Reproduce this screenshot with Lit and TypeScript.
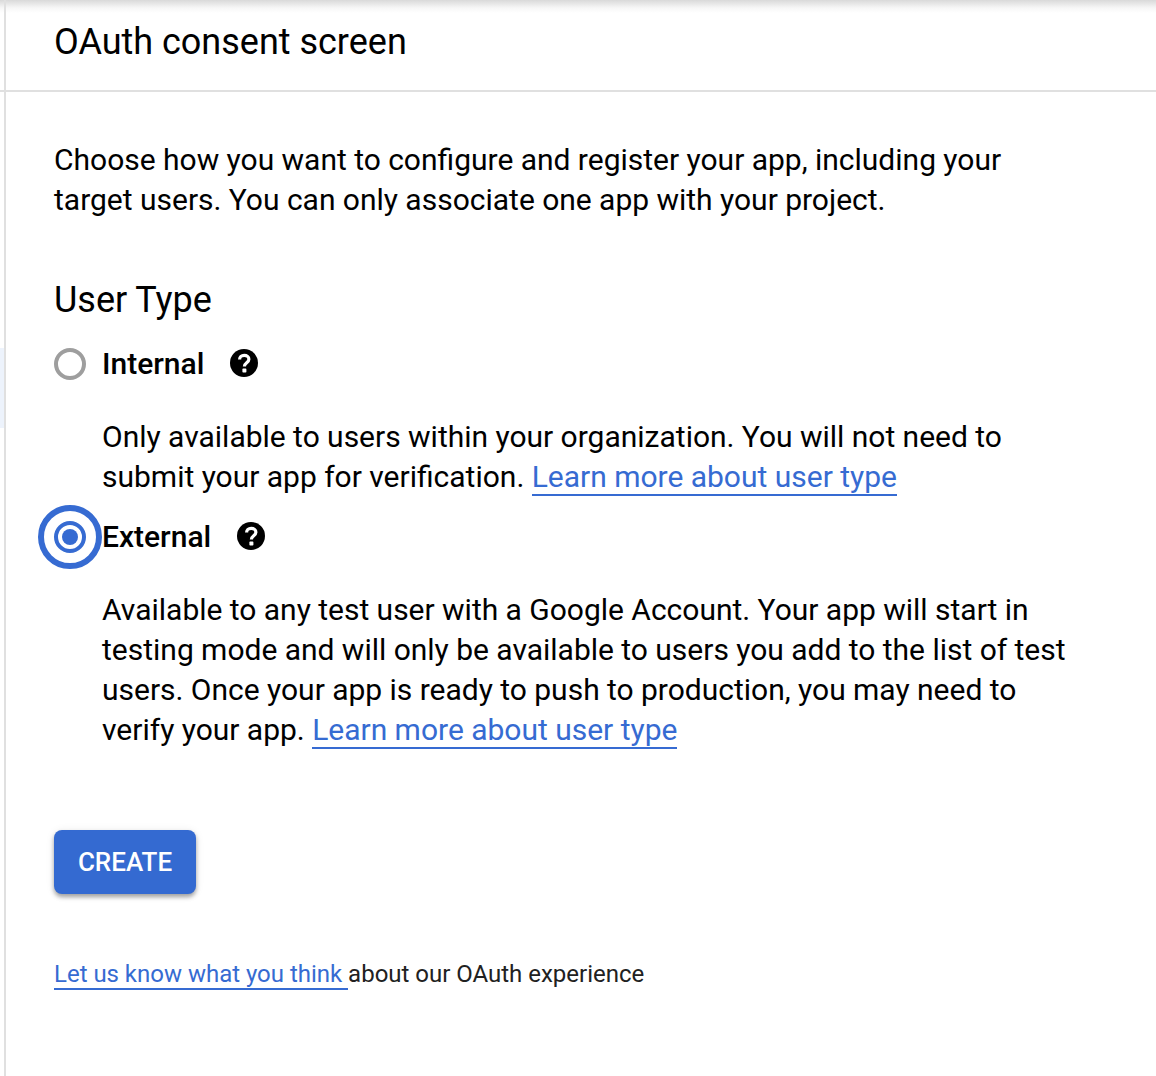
import { LitElement, html, css } from "lit";
import { customElement, state } from "lit/decorators.js";

@customElement("app-root")
export class AppRoot extends LitElement {
  @state() private selected = "External";

  static styles = css`
    :host { display: block; height: 1076px; overflow: hidden; background: #fff; color: #000; font-family: Roboto, sans-serif; font-size: 30px; line-height: 40px; word-spacing: -0.08px; }
    .shell { display: flex; height: 1076px; background: linear-gradient(to bottom, #d9d9d9 0, #e8e8e8 4px, #f7f7f7 8px, #fff 13px) no-repeat; }
    .rail { width: 4px; border-right: 2px solid #e0e0e0; flex: none; }
    .rail-head { height: 90px; border-bottom: 2px solid #e0e0e0; }
    .current { margin-top: 256px; height: 80px; background: #edf3fc; }
    .page { flex: 1; min-width: 0; }
    header { height: 90px; box-sizing: content-box; border-bottom: 2px solid #e0e0e0; padding-left: 48px; }
    h1, h2, p { margin: 0; font-weight: 400; white-space: nowrap; }
    h1 { font-size: 36px; line-height: 84px; }
    main { padding: 48px 0 0 48px; }
    h2 { font-size: 36px; line-height: 48px; margin-top: 56px; }
    .row { display: flex; align-items: center; height: 40px; margin-top: 20px; }
    .radio { width: 32px; height: 32px; margin-right: 16px; overflow: visible; flex: none; }
    .name { font-weight: 500; }
    .help { width: 28px; height: 28px; margin-left: 26px; margin-top: -2px; }
    .desc { margin: 33px 0 0 48px; }
    a { color: #366bd2; border-bottom: 2px solid #366bd2; text-decoration: none; }
    button { display: block; margin-top: 80px; width: 142px; height: 64px; border: 0; border-radius: 8px; background: #346ad1; color: #fff; font: 500 26px/64px Roboto, sans-serif; padding: 0; box-shadow: 0 3px 4px rgba(0,0,0,.34), 0 1px 10px rgba(0,0,0,.08); }
    .feedback { margin-top: 60px; font-size: 24px; color: #212121; }
  `;

  private radio(name: string) {
    const on = this.selected === name;
    return html`<svg class="radio" viewBox="0 0 32 32" @click=${() => (this.selected = name)}>
      ${on
        ? html`<svg viewBox="0 0 32 32" overflow="visible"><circle cx="16" cy="16" r="29" fill="none" stroke="#366bd2" stroke-width="6"/><circle cx="16" cy="16" r="14" fill="none" stroke="#366bd2" stroke-width="4"/><circle cx="16" cy="16" r="8" fill="#366bd2"/></svg>`
        : html`<svg viewBox="0 0 32 32"><circle cx="16" cy="16" r="14" fill="none" stroke="#9e9e9e" stroke-width="4"/></svg>`}
    </svg>`;
  }

  private help() {
    return html`<svg class="help" viewBox="0 0 28 28"><circle cx="14" cy="14" r="14"/><path d="M9.600 10.600C9.600 7.900 11.500 6.300 14.200 6.300s4.700 1.500 4.700 4c0 3.500-4.500 3.500-4.500 7.200" fill="none" stroke="#fff" stroke-width="3.200"/><rect x="12.400" y="19.600" width="4" height="4" rx=".8" fill="#fff"/></svg>`;
  }

  render() {
    return html`<div class="shell">
      <div class="rail"><div class="rail-head"></div><div class="current"></div></div>
      <div class="page">
        <header><h1>OAuth consent screen</h1></header>
        <main>
          <p>Choose how you want to configure and register your app, including your<br>target users. You can only associate one app with your project.</p>
          <h2>User Type</h2>
          <div class="row">${this.radio("Internal")}<span class="name">Internal</span>${this.help()}</div>
          <p class="desc">Only available to users within your organization. You will not need to<br>submit your app for verification. <a>Learn more about user type</a></p>
          <div class="row">${this.radio("External")}<span class="name">External</span>${this.help()}</div>
          <p class="desc">Available to any test user with a Google Account. Your app will start in<br>testing mode and will only be available to users you add to the list of test<br>users. Once your app is ready to push to production, you may need to<br>verify your app. <a>Learn more about user type</a></p>
          <button>CREATE</button>
          <p class="feedback"><a>Let us know what you think </a>about our OAuth experience</p>
        </main>
      </div>
    </div>`;
  }
}
